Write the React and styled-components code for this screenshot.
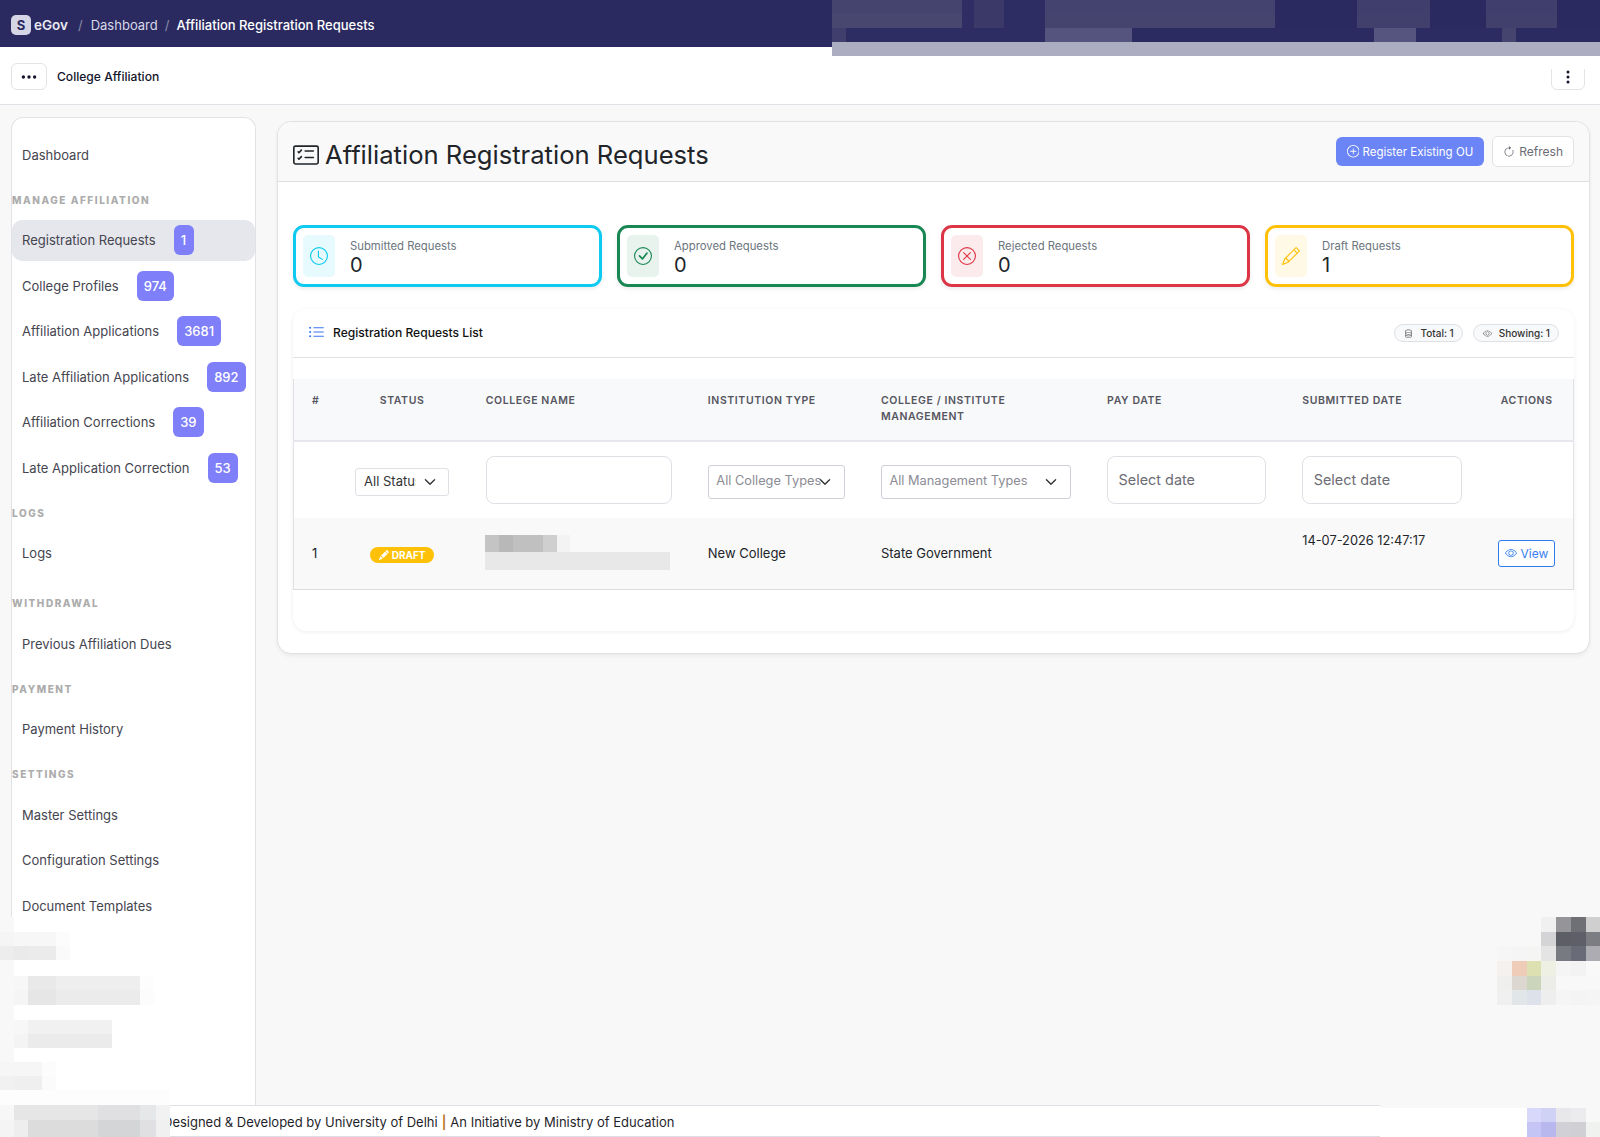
import React from 'react';
import styled, { createGlobalStyle } from 'styled-components';
import {
  BsCardChecklist, BsClock, BsCheckCircle, BsXCircle, BsPencil, BsPencilFill, BsListUl, BsPlusCircle,
  BsArrowClockwise, BsEye, BsDatabase, BsThreeDots, BsThreeDotsVertical, BsChevronDown,
} from 'react-icons/bs';

const GlobalStyle = createGlobalStyle`
  html, body { margin: 0; padding: 0; background: #f8f8f8; }
  body { font-family: Inter, "Liberation Sans", sans-serif; color: #212529; }
  * { box-sizing: border-box; }
`;

const Page = styled.div`
  position: relative;
  width: 1600px;
  height: 1137px;
  overflow: hidden;
  display: flex;
  flex-direction: column;
  background: #f8f8f8;
`;

const TopBar = styled.header`
  height: 47px;
  flex: none;
  display: flex;
  align-items: center;
  padding: 2px 0 0 11px;
  background: #2a2a61;
  color: #fff;
  font-size: 13px;
`;

const LogoBox = styled.span`
  width: 20px;
  height: 20px;
  margin-right: 3px;
  display: flex;
  align-items: center;
  justify-content: center;
  border-radius: 5px;
  background: #d5d5e6;
  color: #2a2a61;
  font-size: 13px;
  font-weight: 700;
`;

const Brand = styled.span`
  font-size: 13.5px;
  font-weight: 600;
  color: #e8e8f2;
`;

const Slash = styled.span`
  margin: 0 ${(p) => p.$right || 8}px 0 ${(p) => p.$left || 8}px;
  color: #8a8aa8;
`;

const Crumb = styled.span`
  color: ${(p) => (p.$current ? '#fff' : '#d8d8e8')};
  font-weight: ${(p) => (p.$current ? 500 : 400)};
`;

const SubBar = styled.div`
  height: 58px;
  flex: none;
  display: flex;
  align-items: center;
  padding: 2px 15px 0 11px;
  background: #fff;
  border-bottom: 1px solid #e0e0e6;
`;

const IconButton = styled.button`
  width: ${(p) => p.$w || 36}px;
  height: 27px;
  display: flex;
  align-items: center;
  justify-content: center;
  padding: 0;
  background: #fff;
  border: 1px solid #e4e4e8;
  border-radius: 6px;
  color: #15152e;
  font-size: ${(p) => p.$size || 18}px;
`;

const SubTitle = styled.span`
  margin-left: 10px;
  font-size: 12.1px;
  font-weight: 500;
  color: #14142b;
  flex: 1;
`;

const Body = styled.div`
  flex: 1;
  min-height: 0;
  display: flex;
  align-items: flex-start;
  padding-left: 11px;
`;

const Sidebar = styled.aside`
  width: 245px;
  height: 989px;
  flex: none;
  margin-top: 12px;
  padding-top: 16px;
  background: #fff;
  border: 1px solid #e2e2e6;
  border-bottom: 0;
  border-radius: 12px 12px 0 0;
`;

const NavItem = styled.div`
  height: 41px;
  margin-bottom: 4.5px;
  display: flex;
  align-items: center;
  padding-left: 10px;
  border-radius: 10px;
  font-size: 13px;
  color: #45454f;
  background: ${(p) => (p.$active ? '#e6e7ec' : 'transparent')};
`;

const NavLabel = styled.div`
  height: 14px;
  margin: ${(p) => p.$top || 17.5}px 0 13px;
  font-size: 10px;
  line-height: 14px;
  font-weight: 800;
  letter-spacing: 1.55px;
  color: #acacac;
`;

const Badge = styled.span`
  height: 30px;
  min-width: 20px;
  margin-left: 18px;
  padding: 0 ${(p) => (p.$narrow ? 0 : 7)}px;
  display: flex;
  align-items: center;
  justify-content: center;
  border-radius: 6px;
  background: #7f7ff9;
  color: #fff;
  font-size: 13px;
  font-weight: 500;
`;

const Main = styled.section`
  width: 1313px;
  flex: none;
  margin: 16px 0 0 21px;
  background: #fff;
  border: 1px solid #e2e2e6;
  border-radius: 14px;
  box-shadow: 0 2px 4px rgba(0, 0, 0, 0.06);
`;

const MainHeader = styled.div`
  height: 60px;
  display: flex;
  align-items: center;
  padding: 0 15px;
  background: #f9f9f9;
  border-bottom: 1px solid #dedee2;
  border-radius: 14px 14px 0 0;
`;

const PageTitle = styled.h1`
  flex: 1;
  display: flex;
  align-items: center;
  gap: 6px;
  margin: 0;
  padding-top: 6px;
  font-size: 25.6px;
  font-weight: 400;
  color: #212529;
  svg { font-size: 26px; }
`;

const PrimaryButton = styled.button`
  height: 29px;
  display: flex;
  align-items: center;
  gap: 3px;
  padding: 0 11px;
  background: #6b85f6;
  border: 0;
  border-radius: 6px;
  color: #fff;
  font: 400 11.5px Inter, sans-serif;
  svg { font-size: 12.5px; }
`;

const GhostButton = styled.button`
  height: 31px;
  display: flex;
  align-items: center;
  gap: 4px;
  margin-left: 8px;
  padding: 0 10px;
  background: #fff;
  border: 1px solid #e2e2e6;
  border-radius: 6px;
  color: #6c6c74;
  font: 400 12px Inter, sans-serif;
`;

const Content = styled.div`
  padding: 43px 15px 22px;
`;

const StatGrid = styled.div`
  display: grid;
  grid-template-columns: repeat(4, 1fr);
  gap: 15px;
`;

const StatCard = styled.div`
  height: 62px;
  display: flex;
  align-items: center;
  gap: 15px;
  padding: 0 7px;
  background: #fff;
  border: 3px solid ${(p) => p.$color};
  border-radius: 11px;
  box-shadow: 0 2px 4px rgba(0, 0, 0, 0.08);
`;

const StatIcon = styled.div`
  width: 32px;
  height: 42px;
  flex: none;
  display: flex;
  align-items: center;
  justify-content: center;
  border-radius: 5px;
  background: ${(p) => p.$tint};
  color: ${(p) => p.$color};
  font-size: 18px;
`;

const StatText = styled.div`
  padding-top: 3px;
`;

const StatLabel = styled.div`
  font-size: 11.3px;
  line-height: 15px;
  color: #6c757d;
`;

const StatValue = styled.div`
  font-size: 20px;
  line-height: 23px;
  color: #212529;
`;

const ListCard = styled.div`
  height: 322px;
  margin-top: 22px;
  background: #fff;
  border-radius: 14px;
  box-shadow: 0 1px 4px rgba(0, 0, 0, 0.07);
`;

const ListHeader = styled.div`
  height: 49px;
  display: flex;
  align-items: center;
  padding: 0 15px;
  border-bottom: 1px solid #e2e2e6;
`;

const ListTitle = styled.div`
  flex: 1;
  display: flex;
  align-items: center;
  gap: 8px;
  padding-bottom: 2px;
  font-size: 12.1px;
  font-weight: 500;
  color: #111;
  svg { font-size: 17px; color: #3b76ef; }
`;

const Pill = styled.span`
  height: 18px;
  display: flex;
  align-items: center;
  gap: 7px;
  margin-left: 10px;
  padding: 0 8px 0 9px;
  background: #f8f9fa;
  border: 1px solid #dfe0e6;
  border-radius: 9px;
  font-size: 10px;
  font-weight: 500;
  color: #333;
  svg { font-size: 9px; color: #666; }
`;

const Table = styled.table`
  width: 100%;
  margin-top: 21px;
  table-layout: fixed;
  border-collapse: collapse;
  border-left: 1px solid #e2e2e6;
  border-right: 1px solid #e2e2e6;
`;

const HeadCell = styled.th`
  height: 62px;
  padding: 14px 18px 0;
  vertical-align: top;
  text-align: ${(p) => p.$align || 'left'};
  background: #f8f9fa;
  border-bottom: 2px solid #e6e6ec;
  font-size: 10.5px;
  line-height: 16px;
  font-weight: 600;
  letter-spacing: 0.6px;
  color: #55555f;
`;

const FilterCell = styled.td`
  height: 77px;
  padding: 0 18px;
  text-align: ${(p) => p.$align || 'left'};
  background: #fff;
`;

const DataCell = styled.td`
  height: 71px;
  padding: ${(p) => (p.$top ? '15px 18px 0' : '0 18px')};
  vertical-align: ${(p) => (p.$top ? 'top' : 'middle')};
  text-align: ${(p) => p.$align || 'left'};
  background: #f9f9f9;
  border-bottom: 1px solid #dcdce0;
  font-size: ${(p) => (p.$top ? 12.8 : 13)}px;
  color: #212529;
`;

const StatusSelect = styled.div`
  width: 94px;
  height: 28px;
  margin: 3px auto 0;
  display: flex;
  align-items: center;
  padding: 0 12px 2px 8px;
  background: #fff;
  border: 1px solid #dfdfe6;
  border-radius: 3px;
  font-size: 13px;
  color: #333;
  svg { flex: none; font-size: 12px; margin: 2px 0 0 8px; color: #222; stroke: currentColor; stroke-width: 1; }
`;

const ClipText = styled.span`
  flex: 1;
  min-width: 0;
  overflow: hidden;
  white-space: nowrap;
`;

const SelectText = styled.span`
  flex: 1;
  min-width: 0;
  white-space: nowrap;
`;

const FilterSelect = styled.div`
  height: 34px;
  margin-top: 3px;
  display: flex;
  align-items: center;
  padding: 0 13px 2px 7.5px;
  background: #fff;
  border: 1px solid #cfd0d8;
  border-radius: 3px;
  font-size: 12.8px;
  color: #8c8c94;
  svg { flex: none; font-size: 12px; margin-top: 2px; color: #222; stroke: currentColor; stroke-width: 1; }
`;

const FilterInput = styled.div`
  height: 48px;
  display: flex;
  align-items: center;
  padding: 0 10.5px 1px;
  background: #fff;
  border: 1px solid #dfdfe6;
  border-radius: 8px;
  font-size: 14.4px;
  color: #6c6c74;
`;

const DraftBadge = styled.span`
  height: 16px;
  margin-top: 3px;
  display: inline-flex;
  align-items: center;
  gap: 3px;
  padding: 0 9px;
  background: #ffc107;
  border-radius: 8px;
  color: #fff;
  font-size: 10px;
  font-weight: 700;
  svg { font-size: 10px; }
`;

const ViewButton = styled.button`
  width: 57px;
  height: 27px;
  margin-right: 1px;
  display: inline-flex;
  align-items: center;
  justify-content: center;
  gap: 3px;
  padding: 0;
  background: #fff;
  border: 1px solid #2f7cf0;
  border-radius: 3px;
  color: #3a80ef;
  font: 400 12px Inter, sans-serif;
  svg { font-size: 12px; }
`;

const Footer = styled.footer`
  height: 32px;
  flex: none;
  display: flex;
  align-items: center;
  padding: 2px 0 0 163px;
  background: #fff;
  border-top: 1px solid #e0e0e6;
  border-bottom: 1px solid #dcdce4;
  font-size: 13px;
  color: #1f1f2b;
`;

const FooterBar = styled.span`
  margin: 0 4px;
  font-weight: 600;
  color: #b8701a;
`;

const Mosaic = styled.div`
  position: absolute;
  left: ${(p) => p.$x}px;
  top: ${(p) => p.$y}px;
  display: flex;
  flex-direction: column;
`;

const MosaicRow = styled.div`
  height: ${(p) => p.$h}px;
  display: flex;
`;

const Patch = styled.div`
  width: ${(p) => p.$w}px;
  height: 100%;
  flex: none;
`;

// pixelated areas of the screenshot: [row height, [width, colour]...]
const topMosaic = [
  [14, [[130, '#45446f'], [12, '#2f2e64'], [30, '#3a3968'], [41, '#2e2d63'], [230, '#44436f'], [82, '#2a2a61'], [73, '#3f3e6c'], [56, '#2a2a61'], [71, '#3f3e6c'], [43, '#2a2a61']]],
  [14, [[130, '#48476f'], [12, '#2f2e64'], [30, '#3a3968'], [41, '#2e2d63'], [230, '#45446f'], [82, '#2a2a61'], [73, '#41406d'], [56, '#2a2a61'], [71, '#41406d'], [43, '#2a2a61']]],
  [14, [[14, '#3f3e6c'], [199, '#2d2c63'], [87, '#55547f'], [242, '#2b2a61'], [42, '#56557f'], [86, '#2c2b62'], [14, '#45446f'], [84, '#2b2a61']]],
  [14, [[768, '#adadc1']]],
  [13, [[768, '#fff']]],
];

const leftMosaic = [
  [15, [[14, '#f8f8f8'], [156, '#fff']]],
  [14, [[14, '#f5f5f5'], [42, '#f7f7f7'], [14, '#fcfcfc'], [100, '#fff']]],
  [14, [[14, '#ededed'], [14, '#eaeaea'], [28, '#ebebeb'], [14, '#fafafa'], [100, '#fff']]],
  [16, [[14, '#f8f8f8'], [156, '#fff']]],
  [14, [[14, '#f8f8f8'], [14, '#f7f7f7'], [28, '#e9e9ea'], [84, '#eeeeee'], [14, '#fdfdfd'], [16, '#fff']]],
  [15, [[14, '#f8f8f8'], [14, '#f5f5f5'], [28, '#e6e6e7'], [84, '#ebebeb'], [14, '#fcfcfc'], [16, '#fff']]],
  [15, [[14, '#f8f8f8'], [156, '#fff']]],
  [14, [[14, '#f8f8f8'], [14, '#f7f7f7'], [84, '#f1f1f1'], [58, '#fff']]],
  [14, [[14, '#f8f8f8'], [14, '#f4f4f4'], [84, '#ebebeb'], [58, '#fff']]],
  [14, [[14, '#f8f8f8'], [156, '#fff']]],
  [14, [[42, '#f6f6f6'], [14, '#fcfcfc'], [114, '#fff']]],
  [14, [[14, '#f1f1f1'], [28, '#efefef'], [14, '#fbfbfb'], [114, '#fff']]],
  [15, [[170, '#fdfdfd']]],
  [15, [[14, '#f7f7f7'], [84, '#e6e6e6'], [42, '#e0e0e2'], [16, '#e6e7e8'], [14, '#f2f2f2']]],
  [17, [[14, '#f4f4f4'], [14, '#eeeeee'], [70, '#dcdcdc'], [42, '#d4d5d6'], [16, '#e0e0e2'], [14, '#f0f0f0']]],
];

const sideMosaic = [
  [15, [[44, '#f8f8f8'], [15, '#f0f0f0'], [15, '#949499'], [15, '#6f7075'], [14, '#cfcfd0']]],
  [14, [[44, '#f8f8f8'], [15, '#d4d4d6'], [15, '#5d5e66'], [15, '#5e5f69'], [14, '#7c7d82']]],
  [15, [[15, '#f6f6f6'], [15, '#f5f5f5'], [14, '#f5f5f3'], [15, '#e4e4e4'], [15, '#777a80'], [15, '#6a6b78'], [14, '#adacb2']]],
  [15, [[15, '#f5f1ef'], [15, '#eeccb8'], [14, '#dde0b0'], [15, '#eef0e4'], [15, '#f5f5f5'], [15, '#f3f3f3'], [14, '#f9f9f9']]],
  [14, [[15, '#efefed'], [15, '#dcd7d0'], [14, '#cbd5bc'], [15, '#ecede8'], [44, '#f8f8f8']]],
  [15, [[15, '#f0f0f0'], [15, '#e1e6e9'], [14, '#dde2ea'], [15, '#eeeeee'], [15, '#f5f5f5'], [15, '#f4f4f4'], [14, '#f5f5f5']]],
];

const footerMosaic = [
  [3, [[220, '#f8f8f8']]],
  [14, [[147, '#fff'], [14, '#d8d8fb'], [15, '#d0d2f5'], [15, '#e8e8ea'], [15, '#ececee'], [14, '#f8f8f8']]],
  [15, [[147, '#fff'], [14, '#c4c4f5'], [15, '#b8b8ee'], [15, '#d0d0d6'], [15, '#d0d0d4'], [14, '#f0f2f0']]],
];

const nameMosaic = [
  [17, [[14, '#c4c4c4'], [14, '#b8b8b8'], [30, '#c0c0c0'], [14, '#cfcfcf'], [13, '#f3f3f3']]],
  [18, [[185, '#e8e8e8']]],
];

const renderMosaic = (rows, x, y) => (
  <Mosaic $x={x} $y={y}>
    {rows.map(([h, runs], i) => (
      <MosaicRow key={i} $h={h}>
        {runs.map(([w, c], j) => (
          <Patch key={j} $w={w} style={{ background: c }} />
        ))}
      </MosaicRow>
    ))}
  </Mosaic>
);

const navGroups = [
  { items: [{ text: 'Dashboard' }] },
  {
    label: 'MANAGE AFFILIATION',
    items: [
      { text: 'Registration Requests', badge: '1', active: true, narrow: true },
      { text: 'College Profiles', badge: '974' },
      { text: 'Affiliation Applications', badge: '3681' },
      { text: 'Late Affiliation Applications', badge: '892' },
      { text: 'Affiliation Corrections', badge: '39' },
      { text: 'Late Application Correction', badge: '53' },
    ],
  },
  { label: 'LOGS', items: [{ text: 'Logs' }] },
  { label: 'WITHDRAWAL', top: 22.5, items: [{ text: 'Previous Affiliation Dues' }] },
  { label: 'PAYMENT', items: [{ text: 'Payment History' }] },
  { label: 'SETTINGS', items: [{ text: 'Master Settings' }, { text: 'Configuration Settings' }, { text: 'Document Templates' }] },
];

const stats = [
  { label: 'Submitted Requests', value: 0, color: '#0dcaf0', tint: '#e7fafe', Icon: BsClock },
  { label: 'Approved Requests', value: 0, color: '#198754', tint: '#e8f3ee', Icon: BsCheckCircle },
  { label: 'Rejected Requests', value: 0, color: '#dc3545', tint: '#fbebec', Icon: BsXCircle },
  { label: 'Draft Requests', value: 1, color: '#ffc107', tint: '#fff9e6', Icon: BsPencil },
];

const columns = [43, 131, 222, 173, 226, 195, 196, 93];

export default function App() {
  return (
    <Page>
      <GlobalStyle />
      <TopBar>
        <LogoBox>S</LogoBox>
        <Brand>eGov</Brand>
        <Slash $left={10}>/</Slash>
        <Crumb>Dashboard</Crumb>
        <Slash $left={7} $right={7}>/</Slash>
        <Crumb $current>Affiliation Registration Requests</Crumb>
      </TopBar>
      <SubBar>
        <IconButton><BsThreeDots /></IconButton>
        <SubTitle>College Affiliation</SubTitle>
        <IconButton $w={34} $size={16}><BsThreeDotsVertical /></IconButton>
      </SubBar>
      <Body>
        <Sidebar>
          {navGroups.map((group, g) => (
            <div key={g}>
              {group.label && <NavLabel $top={group.top}>{group.label}</NavLabel>}
              {group.items.map((item) => (
                <NavItem key={item.text} $active={item.active}>
                  {item.text}
                  {item.badge && <Badge $narrow={item.narrow}>{item.badge}</Badge>}
                </NavItem>
              ))}
            </div>
          ))}
        </Sidebar>
        <Main>
          <MainHeader>
            <PageTitle><BsCardChecklist />Affiliation Registration Requests</PageTitle>
            <PrimaryButton><BsPlusCircle />Register Existing OU</PrimaryButton>
            <GhostButton><BsArrowClockwise />Refresh</GhostButton>
          </MainHeader>
          <Content>
            <StatGrid>
              {stats.map(({ label, value, color, tint, Icon }) => (
                <StatCard key={label} $color={color}>
                  <StatIcon $color={color} $tint={tint}><Icon /></StatIcon>
                  <StatText>
                    <StatLabel>{label}</StatLabel>
                    <StatValue>{value}</StatValue>
                  </StatText>
                </StatCard>
              ))}
            </StatGrid>
            <ListCard>
              <ListHeader>
                <ListTitle><BsListUl />Registration Requests List</ListTitle>
                <Pill><BsDatabase />Total: 1</Pill>
                <Pill><BsEye />Showing: 1</Pill>
              </ListHeader>
              <Table>
                <colgroup>
                  {columns.map((w, i) => <col key={i} style={{ width: w }} />)}
                </colgroup>
                <thead>
                  <tr>
                    <HeadCell>#</HeadCell>
                    <HeadCell $align="center">STATUS</HeadCell>
                    <HeadCell>COLLEGE NAME</HeadCell>
                    <HeadCell>INSTITUTION TYPE</HeadCell>
                    <HeadCell>COLLEGE / INSTITUTE MANAGEMENT</HeadCell>
                    <HeadCell>PAY DATE</HeadCell>
                    <HeadCell>SUBMITTED DATE</HeadCell>
                    <HeadCell $align="center">ACTIONS</HeadCell>
                  </tr>
                </thead>
                <tbody>
                  <tr>
                    <FilterCell />
                    <FilterCell>
                      <StatusSelect><ClipText>All Status</ClipText><BsChevronDown /></StatusSelect>
                    </FilterCell>
                    <FilterCell><FilterInput /></FilterCell>
                    <FilterCell>
                      <FilterSelect><SelectText>All College Types</SelectText><BsChevronDown /></FilterSelect>
                    </FilterCell>
                    <FilterCell>
                      <FilterSelect><SelectText>All Management Types</SelectText><BsChevronDown /></FilterSelect>
                    </FilterCell>
                    <FilterCell><FilterInput>Select date</FilterInput></FilterCell>
                    <FilterCell><FilterInput>Select date</FilterInput></FilterCell>
                    <FilterCell />
                  </tr>
                  <tr>
                    <DataCell>1</DataCell>
                    <DataCell $align="center"><DraftBadge><BsPencilFill />DRAFT</DraftBadge></DataCell>
                    <DataCell />
                    <DataCell>New College</DataCell>
                    <DataCell>State Government</DataCell>
                    <DataCell />
                    <DataCell $top>14-07-2026 12:47:17</DataCell>
                    <DataCell $align="center"><ViewButton><BsEye />View</ViewButton></DataCell>
                  </tr>
                </tbody>
              </Table>
            </ListCard>
          </Content>
        </Main>
      </Body>
      <Footer>
        Designed &amp; Developed by University of Delhi<FooterBar>|</FooterBar>An Initiative by Ministry of Education
      </Footer>
      {renderMosaic(topMosaic, 832, 0)}
      {renderMosaic(leftMosaic, 0, 917)}
      {renderMosaic(sideMosaic, 1497, 917)}
      {renderMosaic(footerMosaic, 1380, 1105)}
      {renderMosaic(nameMosaic, 485, 535)}
    </Page>
  );
}
